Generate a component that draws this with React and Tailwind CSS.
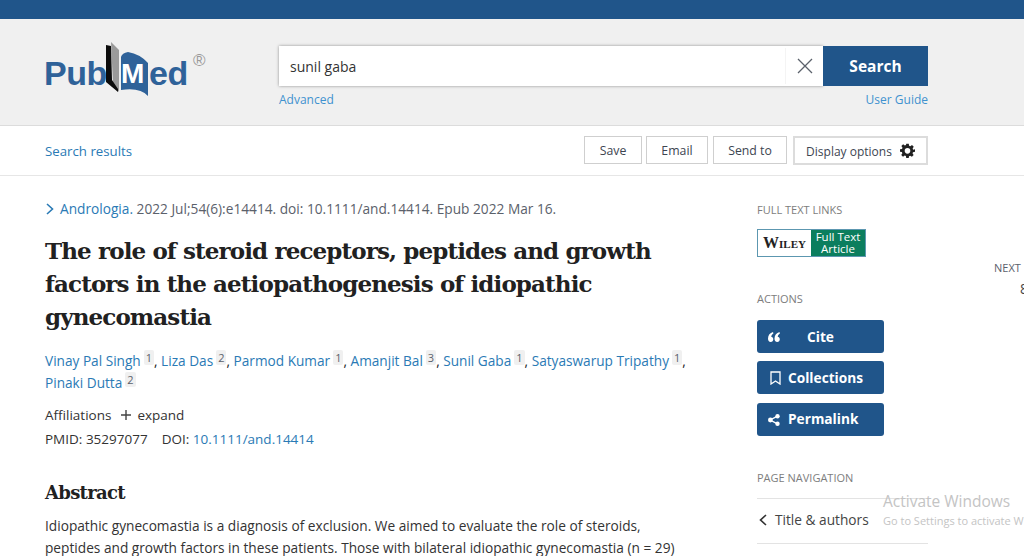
import React from "react";

const Sup = ({ n }) => (
  <span className="inline-block bg-[#f0f0f0] text-[#5b616b] text-[11px] leading-[15px] px-[2px] ml-[3px] align-[4px] rounded-[2px]">{n}</span>
);
const A = ({ children }) => <a className="text-[#2a7ab5]">{children}</a>;

function Logo() {
  return (
    <div className="relative w-[170px] h-[60px] font-['Liberation_Sans',sans-serif]">
      <span className="absolute left-0 top-[11px] text-[34px] leading-[40px] font-bold text-[#2f6299] tracking-[-0.5px]">Pub</span>
      <svg className="absolute left-[60px] top-0" width="46" height="56" viewBox="0 0 46 56">
        <path d="M7 0 L15 8 L15 50 L9 42 Z" fill="#9a9a9a" />
        <path d="M2 3 L7 4 L8 38 L14 47 L14 50 L2 40 Z" fill="#0c0c0c" />
        <path d="M17 48 L17 15 Q18 11 24 10 Q36 12 44 21 L44 54 Q36 45 17 48Z" fill="#2f6299" />
      </svg>
      <span className="absolute left-[77px] top-[17px] text-[28px] leading-[30px] font-bold text-white">M</span>
      <span className="absolute left-[105px] top-[11px] text-[34px] leading-[40px] font-bold text-[#2f6299] tracking-[-0.5px]">ed</span>
      <span className="absolute left-[149px] top-[10px] text-[17px] leading-[18px] text-[#9a9a9a]">®</span>
    </div>
  );
}

const Btn = ({ children, cls }) => (
  <button className={"text-[#3d4551] flex items-center justify-center pt-[3px] " + cls}>{children}</button>
);

const Act = ({ icon, label, cls }) => (
  <button className={"h-[33px] w-[127px] rounded-[3px] bg-[#20558a] text-white font-bold text-[13.7px] flex items-center " + cls}>
    {icon}
    <span>{label}</span>
  </button>
);

export default function App() {
  return (
    <div className="relative w-[1024px] h-[556px] overflow-hidden bg-white font-['Open_Sans',sans-serif] text-[14px] text-[#212121]">
      <div className="h-[19px] bg-[#20558a]" />
      <header className="h-[107px] bg-[#f0f0f0] border-b border-[#dcdcdc] pl-[44px] pr-[96px] flex">
        <div className="w-[235px] pt-[23px]"><Logo /></div>
        <div className="flex-1 pt-[27px]">
          <div className="flex h-[40px]">
            <div className="flex-1 bg-white shadow-[0_0_3px_rgba(0,0,0,0.4)] flex items-center pl-[11px] text-[14px] text-[#333]">
              <span className="flex-1">sunil gaba</span>
              <span className="w-[38px] h-[36px] flex items-center justify-center border-l border-[#f4f4f4]">
                <svg width="16" height="16" viewBox="0 0 16 16" stroke="#5b616b" strokeWidth="1.3"><path d="M1 1 L15 15 M15 1 L1 15" /></svg>
              </span>
            </div>
            <button className="w-[105px] bg-[#20558a] text-white font-bold text-[15.5px] pt-[2px]">Search</button>
          </div>
          <div className="flex justify-between mt-[5px] text-[12px] leading-[18px] text-[#3f92cf]">
            <span>Advanced</span><span>User Guide</span>
          </div>
        </div>
      </header>
      <nav className="h-[50px] border-b border-[#e6e6e6] pl-[45px] pr-[96px] flex items-center justify-between">
        <span className="text-[13.25px] text-[#2a7ab5] pt-[2px]">Search results</span>
        <div className="flex items-start gap-[4px] mb-[1px]">
          <Btn cls="text-[12.3px] h-[28px] w-[58px] border border-[#cfcfcf]">Save</Btn>
          <Btn cls="text-[12.3px] h-[28px] w-[62px] border border-[#cfcfcf]">Email</Btn>
          <Btn cls="text-[12.3px] h-[28px] w-[74px] ml-[1px] border border-[#cfcfcf]">Send to</Btn>
          <Btn cls="text-[12px] h-[29px] w-[135px] ml-[2px] border-2 border-[#dcdcdc] gap-[8px]">
            Display options
            <svg className="-mt-[2px]" width="15" height="15" viewBox="0 0 24 24" fill="#212121">
              <path fillRule="evenodd" d="M10 1h4l.6 3.2 1.9.8 2.7-1.8 2.8 2.8-1.8 2.7.8 1.9L24 10v4l-3.2.6-.8 1.9 1.8 2.7-2.8 2.8-2.7-1.8-1.9.8L14 24h-4l-.6-3.2-1.9-.8-2.7 1.8-2.8-2.8 1.8-2.7-.8-1.9L0 14v-4l3.2-.6.8-1.9L2.2 4.8 5 2l2.7 1.8 1.9-.8L10 1Zm2 7a4.5 4.5 0 1 0 0 9 4.5 4.5 0 0 0 0-9Z" />
            </svg>
          </Btn>
        </div>
      </nav>
      <main className="flex pl-[45px]">
        <article className="w-[712px] shrink-0 pt-[24px]">
          <div className="flex items-center text-[13.7px] leading-[18px] text-[#5b616b]">
            <svg className="mr-[6px] ml-[1px]" width="8" height="12" viewBox="0 0 8 12" fill="none" stroke="#2a7ab5" strokeWidth="1.6"><path d="M1 1 L6.5 6 L1 11" /></svg>
            <A>Andrologia.</A>&nbsp;2022 Jul;54(6):e14414. doi: 10.1111/and.14414. Epub 2022 Mar 16.
          </div>
          <h1 className="mt-[16px] text-[23px] leading-[33px] font-bold font-['DejaVu_Serif',serif] tracking-[-0.88px] text-[#212121] w-[640px]">
            The role of steroid receptors, peptides and growth factors in the aetiopathogenesis of idiopathic gynecomastia
          </h1>
          <p className="mt-[17px] text-[13.65px] leading-[22px] w-[680px]">
            <A>Vinay Pal Singh</A><Sup n="1" />, <A>Liza Das</A><Sup n="2" />, <A>Parmod Kumar</A><Sup n="1" />, <A>Amanjit Bal</A><Sup n="3" />, <A>Sunil Gaba</A><Sup n="1" />, <A>Satyaswarup Tripathy</A><Sup n="1" />,<br />
            <A>Pinaki Dutta</A><Sup n="2" />
          </p>
          <div className="mt-[9px] leading-[24px] text-[13.5px] text-[#333] flex items-center">
            Affiliations
            <svg className="ml-[10px] mr-[6px]" width="10" height="10" viewBox="0 0 10 10" stroke="#444" strokeWidth="1.4"><path d="M5 0V10M0 5H10" /></svg>
            expand
          </div>
          <div className="leading-[24px] text-[13.5px] text-[#333]">
            PMID: 35297077<span className="ml-[14px]">DOI:</span> <A>10.1111/and.14414</A>
          </div>
          <h2 className="mt-[28px] text-[18px] leading-[28px] font-bold font-['DejaVu_Serif',serif] tracking-[-0.7px]">Abstract</h2>
          <p className="mt-[8px] text-[13.7px] leading-[22px] text-[#333] whitespace-nowrap">
            Idiopathic gynecomastia is a diagnosis of exclusion. We aimed to evaluate the role of steroids,<br />
            peptides and growth factors in these patients. Those with bilateral idiopathic gynecomastia (n = 29)
          </p>
        </article>
        <aside className="w-[171px] shrink-0 pt-[26px]">
          <div className="text-[11px] leading-[16px] text-[#7d7d7d]">FULL TEXT LINKS</div>
          <div className="mt-[11px] w-[109px] h-[28px] flex border border-[#5c97b0]">
            <div className="w-[53px] bg-white flex items-center justify-center font-['Liberation_Serif',serif] font-bold text-[16px] [font-variant:small-caps] text-[#222]">Wiley</div>
            <div className="flex-1 bg-[#0b7e5e] text-white font-['Open_Sans',sans-serif] text-[11.5px] leading-[12px] text-center pt-[1px]">Full Text<br />Article</div>
          </div>
          <div className="mt-[34px] text-[11px] leading-[16px] text-[#7d7d7d]">ACTIONS</div>
          <div className="mt-[13px] flex flex-col">
            <Act cls="pl-[11px] pt-[1px]" label="Cite" icon={
              <svg className="mr-[27px]" width="12" height="10" viewBox="0 0 12 10" fill="#fff"><path d="M5 0C2 1 0 3 0 6.5 0 8.500 1 10 2.700 10 4.300 10 5.300 8.800 5.300 7.300 5.300 5.800 4.300 4.900 3.200 4.800 3.300 3.500 4 2.400 5.400 1.400Z" /><path d="M11.500 0C8.500 1 6.500 3 6.500 6.500 6.500 8.500 7.500 10 9.200 10 10.800 10 11.800 8.800 11.800 7.300 11.800 5.800 10.800 4.900 9.700 4.800 9.800 3.500 10.500 2.400 11.900 1.400Z" /></svg>
            } />
            <Act cls="pl-[13px] mt-[8px] pt-[1px]" label="Collections" icon={
              <svg className="mr-[7px]" width="11" height="14" viewBox="0 0 11 14" fill="none" stroke="#fff" strokeWidth="1.3"><path d="M1 1H10V13L5.5 10L1 13Z" /></svg>
            } />
            <Act cls="pl-[11px] mt-[9px]" label="Permalink" icon={
              <svg className="mr-[8px]" width="12" height="12" viewBox="0 0 12 12" fill="#fff" stroke="#fff"><circle cx="9.500" cy="2.200" r="2.200" stroke="none" /><circle cx="2.400" cy="6" r="2.400" stroke="none" /><circle cx="9.500" cy="9.800" r="2.200" stroke="none" /><path d="M9.500 2.200L2.200 6L9.500 9.800" fill="none" strokeWidth="1.400" /></svg>
            } />
          </div>
          <div className="mt-[34px] text-[11px] leading-[16px] text-[#7d7d7d]">PAGE NAVIGATION</div>
          <div className="mt-[12px] border-y border-[#e3e3e3] h-[46px] pb-[2px] flex items-center text-[13.7px] text-[#444]">
            <svg className="ml-[2px] mr-[8px]" width="8" height="12" viewBox="0 0 8 12" fill="none" stroke="#333" strokeWidth="1.6"><path d="M7 1 L1.500 6 L7 11" /></svg>
            Title &amp; authors
          </div>
        </aside>
      </main>
      <div className="absolute left-[994px] top-[261px] text-[11px] leading-[14px] text-[#5b616b]">NEXT</div>
      <div className="absolute left-[1020px] top-[281px] text-[14px] leading-[16px] text-[#444]">8</div>
      <div className="absolute left-[883px] top-[491px] text-[15.5px] leading-[20px] text-[#c4c4c4]">Activate Windows</div>
      <div className="absolute left-[883px] top-[514px] text-[11px] leading-[14px] text-[#c4c4c4] whitespace-nowrap">Go to Settings to activate Windows.</div>
    </div>
  );
}
